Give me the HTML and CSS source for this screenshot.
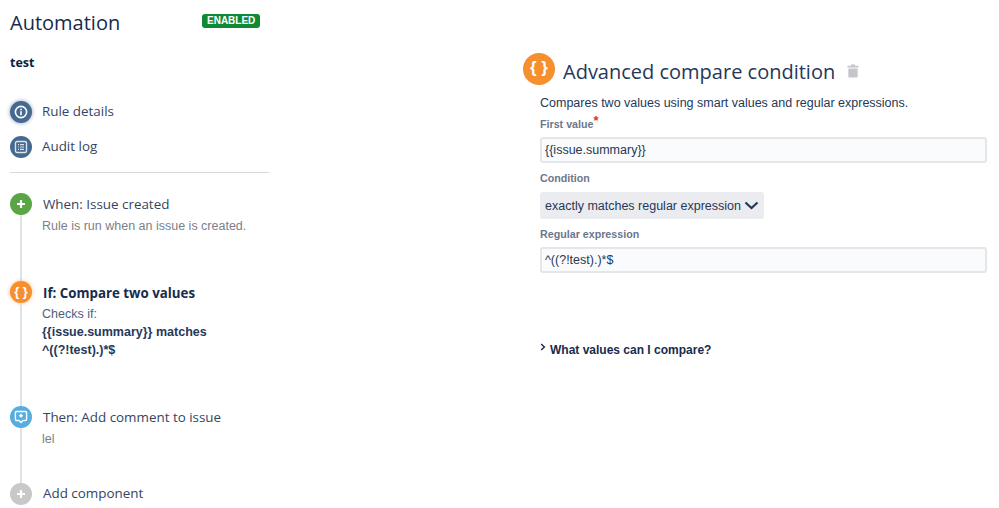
FILE: index.html
```html
<!DOCTYPE html>
<html lang="en">
<head>
    <meta charset="UTF-8">
    <title>Automation</title>
    <link rel="stylesheet" href="styles.css">
</head>
<body>
    <div class="page">
        <div class="sidebar">
            <div class="title-row">
                <h1>Automation</h1>
                <span class="badge">ENABLED</span>
            </div>
            <p class="rule-name">test</p>

            <div class="nav-item nav-first">
                <span class="dot dot-nav dot-glow">
                    <svg width="14" height="14" viewBox="0 0 14 14"><circle cx="7" cy="7" r="5.6" fill="none" stroke="#fff" stroke-width="1.6"/><rect x="6.2" y="6.2" width="1.6" height="4" fill="#fff"/><rect x="6.2" y="3.7" width="1.6" height="1.6" fill="#fff"/></svg>
                </span>
                <span class="nav-label">Rule details</span>
            </div>
            <div class="nav-item">
                <span class="dot dot-nav">
                    <svg width="14" height="14" viewBox="0 0 14 14"><rect x="1.5" y="1.5" width="11" height="11" rx="1.5" fill="none" stroke="#dfe3ea" stroke-width="1.4"/><path d="M4 4.6h1M6 4.6h4M4 7h1M6 7h4M4 9.4h1M6 9.4h4" stroke="#dfe3ea" stroke-width="1.2"/></svg>
                </span>
                <span class="nav-label">Audit log</span>
            </div>
            <hr class="divider">

            <div class="step step-when">
                <div class="rail">
                    <span class="dot dot-green">
                        <svg width="10" height="10" viewBox="0 0 10 10"><path d="M5 1v8M1 5h8" stroke="#fff" stroke-width="2.2"/></svg>
                    </span>
                    <span class="line"></span>
                </div>
                <div class="step-body">
                    <div class="step-title">When: Issue created</div>
                    <div class="step-text">Rule is run when an issue is created.</div>
                </div>
            </div>

            <div class="step step-if">
                <div class="rail">
                    <span class="dot dot-orange dot-glow-orange">{ }</span>
                    <span class="line"></span>
                </div>
                <div class="step-body step-body-if">
                    <div class="step-title step-title-bold">If: Compare two values</div>
                    <div class="step-text step-text-dark">Checks if:</div>
                    <div class="step-code">{{issue.summary}} matches</div>
                    <div class="step-code">^((?!test).)*$</div>
                </div>
            </div>

            <div class="step step-then">
                <div class="rail">
                    <span class="dot dot-blue">
                        <svg width="14" height="14" viewBox="0 0 14 14"><path d="M2.6 1.5h8.8a1.2 1.2 0 0 1 1.2 1.2v6.6a1.2 1.2 0 0 1-1.2 1.2H9L7 12.6 5 10.5H2.6a1.2 1.2 0 0 1-1.2-1.2V2.7a1.2 1.2 0 0 1 1.2-1.2z" fill="none" stroke="#fff" stroke-width="1.4"/><path d="M7 3.8v3.8M5.1 5.7h3.8" stroke="#fff" stroke-width="1.5"/></svg>
                    </span>
                    <span class="line"></span>
                </div>
                <div class="step-body">
                    <div class="step-title">Then: Add comment to issue</div>
                    <div class="step-text">lel</div>
                </div>
            </div>

            <div class="step step-add">
                <div class="rail">
                    <span class="dot dot-grey">
                        <svg width="10" height="10" viewBox="0 0 10 10"><path d="M5 1v8M1 5h8" stroke="#fff" stroke-width="2.2"/></svg>
                    </span>
                </div>
                <div class="step-body step-body-add">
                    <div class="step-title">Add component</div>
                </div>
            </div>
        </div>

        <div class="detail">
            <div class="detail-head">
                <span class="dot dot-orange dot-large">{ }</span>
                <h2>Advanced compare condition</h2>
                <svg class="trash" width="12" height="14" viewBox="0 0 12 14"><path d="M4 0.5h4v1.3h3.5v1.7H0.5V1.8H4z" fill="#c4c6cb"/><path d="M1.3 4.5h9.4v8a1 1 0 0 1-1 1H2.3a1 1 0 0 1-1-1z" fill="#c4c6cb"/></svg>
            </div>
            <div class="form">
                <p class="intro">Compares two values using smart values and regular expressions.</p>
                <label class="field-label label-first">First value<span class="required">*</span></label>
                <div class="text-input">{{issue.summary}}</div>
                <label class="field-label label-condition">Condition</label>
                <div class="select-box">
                    exactly matches regular expression
                    <svg width="15" height="9" viewBox="0 0 15 9"><path d="M1.5 1.5 7.500 7l6-5.500" fill="none" stroke="#253858" stroke-width="2.2"/></svg>
                </div>
                <label class="field-label label-regex">Regular expression</label>
                <div class="text-input">^((?!test).)*$</div>
                <div class="help-toggle">
                    <svg width="6" height="8" viewBox="0 0 6 8"><path d="M1.2 1 4.4 4 1.2 7" fill="none" stroke="#172b4d" stroke-width="1.4"/></svg>
                    <span>What values can I compare?</span>
                </div>
            </div>
        </div>
    </div>
</body>
</html>
```

FILE: styles.css
```css
html, body {
    margin: 0;
    padding: 0;
    background: #fff;
}

body {
    font-family: "Liberation Sans", Arial, sans-serif;
    font-size: 12.5px;
    color: #172b4d;
    overflow: hidden;
}

.page {
    display: flex;
    height: 508px;
}

/* left column */
.sidebar {
    width: 259px;
    margin-left: 10px;
    padding-top: 9px;
}

.title-row {
    display: flex;
    align-items: flex-start;
}

h1 {
    margin: 0;
    width: 192px;
    font-family: "Open Sans", sans-serif;
    font-size: 20px;
    font-weight: 400;
    line-height: 28px;
    color: #172b4d;
}

.badge {
    margin-top: 5px;
    padding: 0 5px;
    height: 14px;
    line-height: 14px;
    background: #0f8a34;
    border-radius: 3px;
    color: #fff;
    font-size: 10px;
    font-weight: 700;
}

.rule-name {
    margin: 9px 0 0;
    font-family: "Open Sans", sans-serif;
    font-size: 12.5px;
    font-weight: 700;
    line-height: 34px;
    color: #091e42;
    height: 33px;
}

.nav-item {
    display: flex;
    align-items: center;
    height: 23px;
    margin-top: 12px;
}

.nav-first {
    margin-top: 21px;
}

.nav-label {
    margin-left: 10px;
    margin-bottom: 2px;
    font-family: "Open Sans", sans-serif;
    font-size: 13.4px;
    color: #344563;
}

.dot {
    flex: none;
    display: flex;
    align-items: center;
    justify-content: center;
    width: 22px;
    height: 22px;
    border-radius: 50%;
    color: #fff;
    font-weight: 700;
}

.dot-nav {
    background: #456a90;
}

.dot-glow {
    box-shadow: 0 0 4px 0 #8fa3ba;
}

.dot-green {
    background: #5aa545;
}

.dot-orange {
    background: #f68f2e;
    font-size: 13px;
    padding-bottom: 2px;
    box-sizing: border-box;
}

.dot-glow-orange {
    box-shadow: 0 0 4px 0 #f9bd85;
}

.dot-blue {
    background: #55ade0;
}

.dot-grey {
    background: #c8c8c8;
}

.divider {
    margin: 14px 0 0;
    border: none;
    border-top: 1px solid #d5d8dc;
}

.step {
    display: flex;
}

.step-when {
    margin-top: 20px;
    height: 88px;
}

.step-if {
    height: 125px;
}

.step-then {
    height: 77px;
}

.rail {
    flex: none;
    display: flex;
    flex-direction: column;
    align-items: center;
    width: 22px;
}

.line {
    flex: 1;
    width: 2px;
    background: #dfe1e4;
}

.step-body {
    margin-left: 11px;
}

.step-body-if {
    padding-top: 1px;
}

.step-body-add {
    margin-top: -1px;
}

.step-title {
    font-family: "Open Sans", sans-serif;
    font-size: 13.4px;
    line-height: 22px;
    color: #344563;
}

.step-title-bold {
    font-size: 13.3px;
    font-weight: 700;
    color: #172b4d;
}

.step-text {
    margin-top: 1px;
    margin-left: -1px;
    font-size: 12.5px;
    line-height: 20px;
    color: #7a7f8a;
}

.step-text-dark {
    line-height: 18px;
    color: #505f79;
}

.step-code {
    margin-left: -1px;
    font-size: 12.5px;
    font-weight: 700;
    line-height: 18px;
    color: #253858;
}

/* right column */
.detail {
    margin-left: 254px;
    width: 464px;
    padding-top: 53px;
}

.detail-head {
    display: flex;
    align-items: flex-start;
}

.dot-large {
    width: 32px;
    height: 32px;
    font-size: 17px;
}

h2 {
    margin: 0 0 0 8px;
    padding-top: 3px;
    font-family: "Open Sans", sans-serif;
    font-size: 20px;
    font-weight: 400;
    line-height: 32px;
    color: #253858;
}

.trash {
    margin-left: 12px;
    margin-top: 11px;
}

.form {
    margin-left: 17px;
    width: 447px;
}

.intro {
    margin: 8px 0 0;
    font-size: 12.5px;
    line-height: 14px;
    color: #253858;
}

.field-label {
    display: block;
    font-size: 10.7px;
    font-weight: 700;
    line-height: 14px;
    color: #6b778c;
}

.label-first {
    margin-top: 7px;
}

.label-condition {
    margin-top: 8px;
}

.label-regex {
    margin-top: 8px;
}

.required {
    position: relative;
    top: -3px;
    color: #de350b;
    font-size: 13px;
}

.text-input {
    margin-top: 6px;
    box-sizing: border-box;
    height: 26px;
    padding: 0 3px;
    line-height: 23px;
    font-size: 12.5px;
    color: #253858;
    background: #fafbfc;
    border: 2px solid #e4e6ea;
    border-radius: 3px;
}

.select-box {
    display: inline-flex;
    align-items: center;
    gap: 3px;
    margin-top: 7px;
    height: 27px;
    padding: 0 5px;
    border-radius: 3px;
    background: #ebecf0;
    font-size: 12.5px;
    color: #253858;
    vertical-align: top;
}

.help-toggle {
    display: flex;
    align-items: flex-start;
    gap: 4px;
    margin-top: 70px;
    font-weight: 700;
    font-size: 12px;
    line-height: 14px;
    color: #172b4d;
}
```
